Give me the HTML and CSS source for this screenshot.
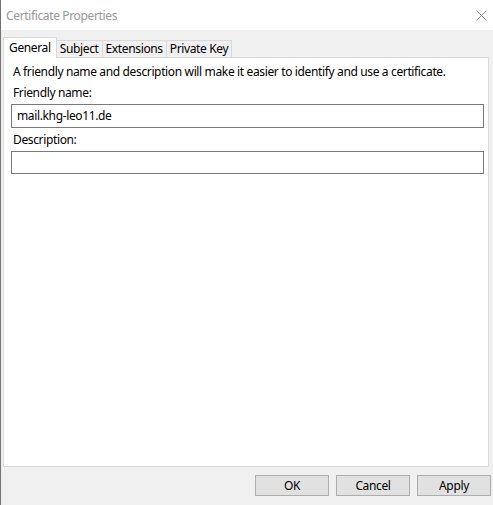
FILE: index.html
```html
<!DOCTYPE html>
<html>
<head>
    <title>Certificate Properties</title>
    <link rel="stylesheet" href="styles.css">
</head>
<body>

    <div class="window">
        <!-- Caption bar -->
        <div class="titlebar">
            <span class="title">Certificate Properties</span>
            <svg class="close" width="11" height="11" viewBox="0 0 11 11">
                <path d="M0.5 0.5 L10.5 10.5 M10.5 0.5 L0.5 10.5" stroke="#8c8c8c" stroke-width="1" fill="none"/>
            </svg>
        </div>

        <div class="content">
            <!-- Tab strip -->
            <div class="tabs">
                <div class="tab active">General</div>
                <div class="tab">Subject</div>
                <div class="tab">Extensions</div>
                <div class="tab">Private Key</div>
            </div>

            <!-- General page -->
            <div class="panel">
                <p class="intro">A friendly name and description will make it easier to identify and use a certificate.</p>
                <label class="label">Friendly name:</label>
                <div class="field first">mail.khg-leo11.de</div>
                <label class="label">Description:</label>
                <div class="field second"></div>
            </div>
        </div>

        <!-- Dialog buttons -->
        <div class="buttons">
            <button class="btn">OK</button>
            <button class="btn">Cancel</button>
            <button class="btn">Apply</button>
        </div>
    </div>

</body>
</html>
```

FILE: styles.css
```css
body { margin: 0; padding: 0; font-family: "Noto Sans", "Open Sans", sans-serif; font-size: 12px; letter-spacing: -0.36px; color: #000; background: #f0f0f0; }
.window { height: 505px; box-sizing: border-box; border-left: 1px solid #737373; background: #f0f0f0; display: flex; flex-direction: column; }

.titlebar { height: 30px; flex: none; background: #fff; display: flex; align-items: center; justify-content: space-between; padding: 0 6px 0 5px; }
.title { color: #999; font-size: 12px; }
.close { display: block; }

.content { flex: 1; display: flex; flex-direction: column; padding: 7px 4px 0 2px; }
.tabs { display: flex; align-items: flex-end; height: 20px; }
.tab { height: 17px; line-height: 16px; padding: 0 3px; border: 1px solid #d9d9d9; border-bottom: none; margin-left: -1px; background: #f0f0f0; box-sizing: border-box; }
.tab:first-child { margin-left: 0; }
.tab.active { height: 21px; line-height: 20px; padding: 0 5px; background: #fff; position: relative; z-index: 1; margin-bottom: -1px; }

.panel { flex: 1; background: #fff; border: 1px solid #d9d9d9; padding: 0 4px 0 7px; }
.intro { margin: 6px 0 0 2px; line-height: 16px; }
.label { display: block; margin: 5px 0 0 2px; line-height: 16px; }
.field + .label { margin-top: 4px; }
.field { height: 24px; box-sizing: border-box; border: 1px solid #7a7a7a; padding: 0 5px; line-height: 21px; margin-top: 3px; }
.field.second { height: 23px; }

.buttons { height: 38px; flex: none; display: flex; justify-content: flex-end; align-items: flex-start; gap: 7px; padding: 8px 2px 0 0; box-sizing: border-box; }
.btn { width: 74px; height: 21px; background: #e1e1e1; border: 1px solid #adadad; font-family: inherit; font-size: 12px; letter-spacing: inherit; color: #000; padding: 0; }
```
